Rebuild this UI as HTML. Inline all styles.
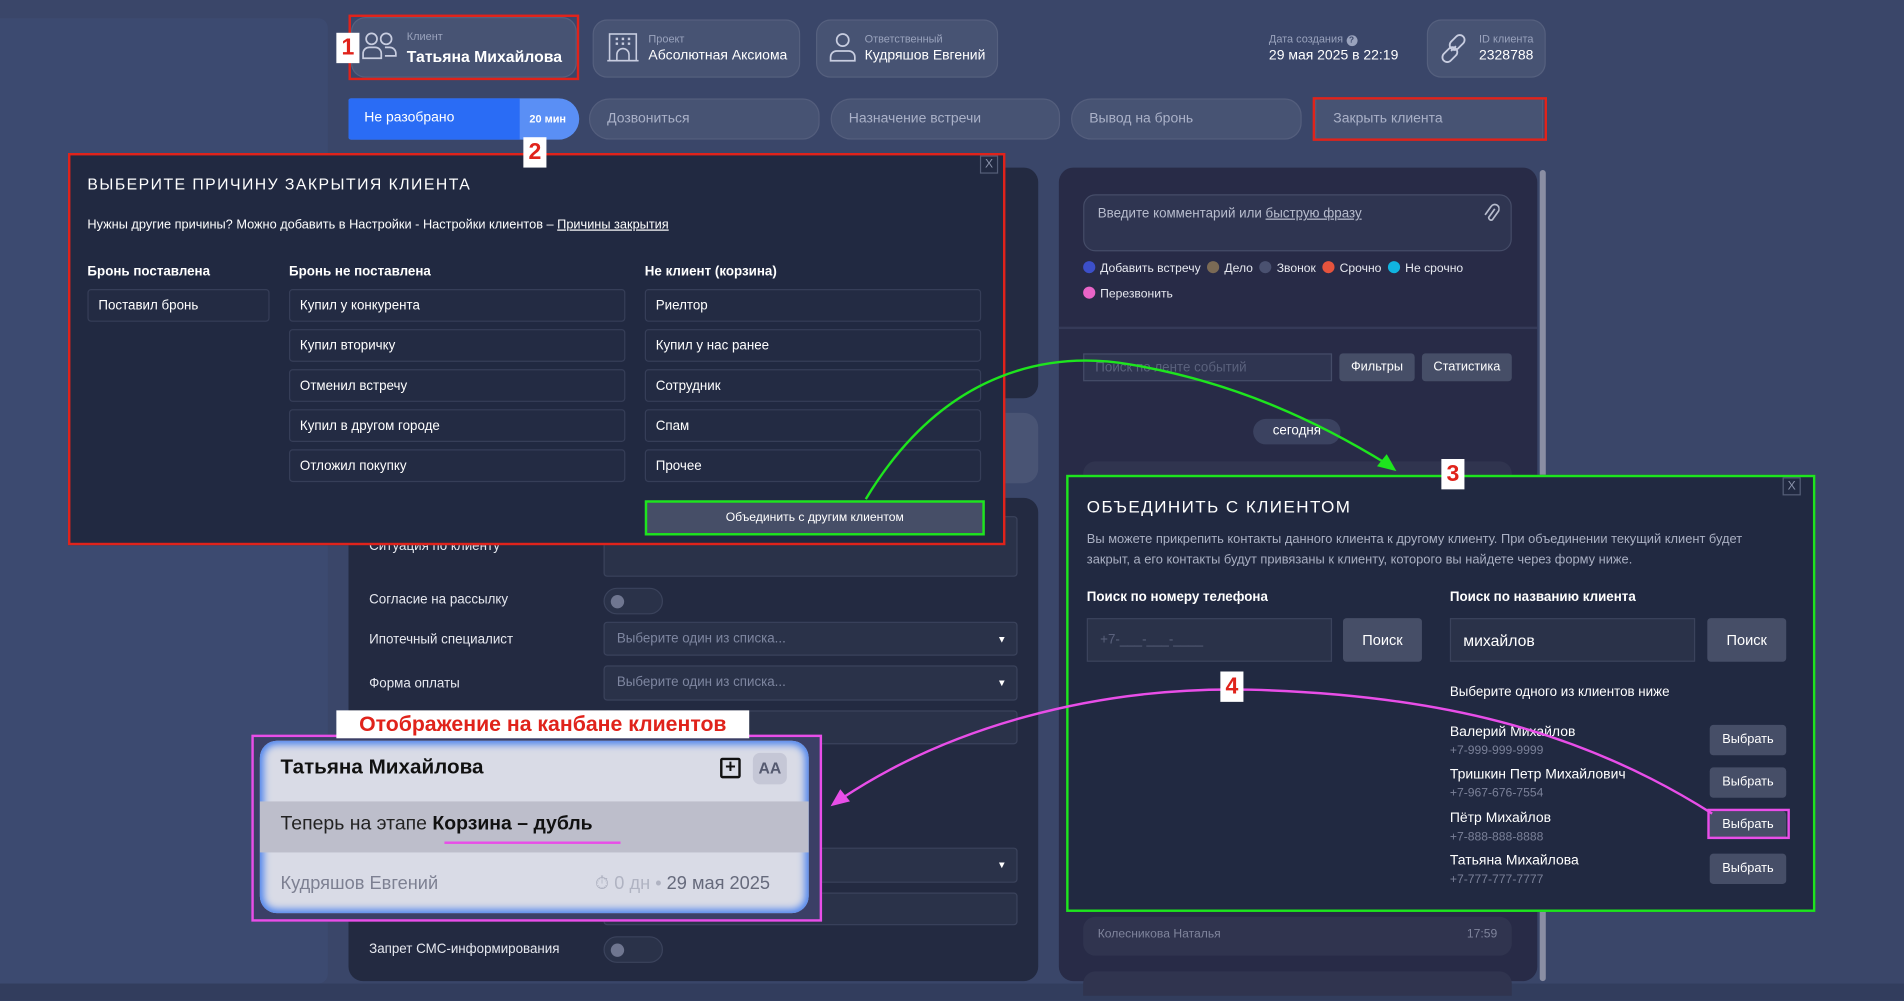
<!DOCTYPE html>
<html><head><meta charset="utf-8"><style>
*{box-sizing:border-box;margin:0;padding:0}
body{width:1904px;height:1000px;overflow:hidden;background:#38446a;font-family:"Liberation Sans","Noto Sans CJK SC",sans-serif;color:#fff}
#w{position:absolute;left:0;top:0;width:1568px;height:824px;transform:scale(1.21429);transform-origin:0 0;background:#3a4669}
.a{position:absolute}
.card{position:absolute;background:rgba(255,255,255,0.07);border:1px solid rgba(255,255,255,0.08);border-radius:12px}
.lbl{font-size:9px;color:#9aa3bd}
.val{font-size:11.5px;color:#fff}
.tab{position:absolute;top:81px;height:34px;border-radius:17px 14px 14px 17px;background:rgba(255,255,255,0.07);border:1px solid rgba(255,255,255,0.07);font-size:11.5px;color:#aab1c8;padding:10px 0 0 14px}
.btn{position:absolute;height:27px;background:#232b43;border:1px solid #363e58;border-radius:3px;font-size:11px;color:#fff;padding:7px 0 0 8px}
.h{position:absolute;font-size:11px;font-weight:bold;color:#fff}
.lab{position:absolute;left:304px;font-size:11px;color:#e6e8ef}
.inp{position:absolute;left:497px;width:341px;background:#2a3249;border:1px solid #3b435c;border-radius:3px;font-size:11px;color:#7e86a0;padding:7px 10px}
.tog{position:absolute;left:497px;width:49px;height:22px;border-radius:11px;background:#2a3249;border:1px solid #3b435c}
.tog:after{content:"";position:absolute;left:5px;top:5px;width:11px;height:11px;border-radius:50%;background:#6f7690}
.dot{display:inline-block;width:10px;height:10px;border-radius:50%;margin-right:4px;vertical-align:-1px}
.sb{position:absolute;background:#464e67;border-radius:3px;font-size:11px;color:#fff;text-align:center}
.badge{position:absolute;background:#fff;color:#e0231b;font-weight:bold;font-size:19px;text-align:center;line-height:25px;width:19px;height:25px}
.x{position:absolute;width:15px;height:15px;border:1px solid #555e78;color:#8a92aa;font-size:10px;text-align:center;line-height:13px}
</style></head><body><div id="w">
<div class="a" style="left:0;top:15px;width:270px;height:795px;background:#3c4a70;border-radius:0 8px 8px 0"></div>
<div class="a" style="left:0;top:810px;width:1568px;height:14px;background:#323d5d"></div>

<div class="card" style="left:289px;top:14px;width:186px;height:50px"></div>
<svg class="a" style="left:298px;top:26px" width="30" height="24" viewBox="0 0 30 24" fill="none" stroke="#c8cde0" stroke-width="1.4"><circle cx="8" cy="6" r="4.5"/><circle cx="20" cy="6" r="4.5"/><path d="M1 22v-4a5 5 0 0 1 5-5h5a5 5 0 0 1 5 5v4z"/><path d="M19 13h4a5 5 0 0 1 5 5v2h-9"/></svg>
<div class="a lbl" style="left:335px;top:25px">Клиент</div>
<div class="a" style="left:335px;top:39px;font-size:13px;font-weight:bold">Татьяна Михайлова</div>
<div class="a" style="left:287px;top:12px;width:190px;height:54px;border:2px solid #e0231b"></div>

<div class="card" style="left:488px;top:16px;width:171px;height:48px"></div>
<svg class="a" style="left:500px;top:27px" width="26" height="24" viewBox="0 0 26 24" fill="none" stroke="#c8cde0" stroke-width="1.3"><rect x="2" y="1" width="22" height="22"/><path d="M7 5h2M12 5h2M17 5h2M7 9h2M12 9h2M17 9h2" stroke-width="2"/><path d="M8 23v-5a5 5 0 0 1 10 0v5"/><path d="M0 23h26"/></svg>
<div class="a lbl" style="left:534px;top:27px">Проект</div>
<div class="a val" style="left:534px;top:40px">Абсолютная Аксиома</div>

<div class="card" style="left:672px;top:16px;width:150px;height:48px"></div>
<svg class="a" style="left:682px;top:26px" width="24" height="26" viewBox="0 0 24 26" fill="none" stroke="#c8cde0" stroke-width="1.4"><circle cx="12" cy="7" r="5"/><path d="M2 24v-3a5 5 0 0 1 5-5h10a5 5 0 0 1 5 5v3z"/></svg>
<div class="a lbl" style="left:712px;top:27px">Ответственный</div>
<div class="a val" style="left:712px;top:40px">Кудряшов Евгений</div>

<div class="a lbl" style="left:1045px;top:27px">Дата создания <span style="display:inline-block;width:9px;height:9px;border-radius:50%;background:#9aa3bd;color:#3a4669;font-size:7px;text-align:center;line-height:9px;font-weight:bold">?</span></div>
<div class="a val" style="left:1045px;top:40px">29 мая 2025 в 22:19</div>

<div class="card" style="left:1175px;top:16px;width:98px;height:48px"></div>
<svg class="a" style="left:1184px;top:27px" width="26" height="26" viewBox="0 0 26 26" fill="none" stroke="#c8cde0" stroke-width="1.5"><path d="M11 15l4-4"/><rect x="12" y="1" width="8" height="14" rx="4" transform="rotate(45 16 8)"/><rect x="6" y="11" width="8" height="14" rx="4" transform="rotate(45 10 18)"/></svg>
<div class="a lbl" style="left:1218px;top:27px">ID клиента</div>
<div class="a val" style="left:1218px;top:40px">2328788</div>

<div class="a" style="left:287px;top:81px;width:190px;height:34px;border-radius:2px 17px 17px 2px;background:#5a8ff5"></div>
<div class="a" style="left:287px;top:81px;width:141px;height:34px;border-radius:2px 0 0 2px;background:#2a6cf5"></div>
<div class="a" style="left:300px;top:91px;font-size:11.5px">Не разобрано</div>
<div class="a" style="left:436px;top:93px;font-size:9px;font-weight:bold">20 мин</div>
<div class="tab" style="left:485px;width:190px">Дозвониться</div>
<div class="tab" style="left:684px;width:189px">Назначение встречи</div>
<div class="tab" style="left:882px;width:190px">Вывод на бронь</div>
<div class="tab" style="left:1083px;width:188px;border-radius:0">Закрыть клиента</div>
<div class="a" style="left:1081px;top:80px;width:193px;height:36px;border:2px solid #e0231b"></div>

<div class="a" style="left:287px;top:138px;width:568px;height:190px;background:#232a41;border-radius:12px"></div>
<div class="a" style="left:810px;top:340px;width:45px;height:58px;background:rgba(255,255,255,0.08);border-radius:12px"></div>
<div class="a" style="left:287px;top:410px;width:568px;height:398px;background:#232a41;border-radius:12px"></div>
<div class="lab" style="top:444px">Ситуация по клиенту</div>
<div class="inp" style="top:425px;height:50px"></div>
<div class="lab" style="top:488px">Согласие на рассылку</div>
<div class="tog" style="top:484px"></div>
<div class="lab" style="top:521px">Ипотечный специалист</div>
<div class="inp" style="top:512px;height:28px">Выберите один из списка...<span style="position:absolute;right:8px;color:#fff;font-size:8px;top:9px">▼</span></div>
<div class="lab" style="top:557px">Форма оплаты</div>
<div class="inp" style="top:548px;height:29px">Выберите один из списка...<span style="position:absolute;right:8px;color:#fff;font-size:8px;top:9px">▼</span></div>
<div class="inp" style="top:585px;height:28px"></div>
<div class="inp" style="top:698px;height:29px"><span style="position:absolute;right:8px;color:#fff;font-size:8px;top:9px">▼</span></div>
<div class="inp" style="top:735px;height:27px"></div>
<div class="lab" style="top:776px">Запрет СМС-информирования</div>
<div class="tog" style="top:771px"></div>

<div class="a" style="left:872px;top:138px;width:394px;height:670px;background:#282b47;border-radius:12px"></div>
<div class="a" style="left:1268px;top:140px;width:5px;height:668px;background:#8a8ea3;border-radius:3px"></div>
<div class="a" style="left:892px;top:160px;width:353px;height:47px;background:#2f3551;border:1px solid #454c68;border-radius:10px;font-size:11px;color:#b7bccd;padding:9px 11px">Введите комментарий или <u>быструю фразу</u></div>
<svg class="a" style="left:1221px;top:167px" width="14" height="17" viewBox="0 0 14 17" fill="none" stroke="#b7bccd" stroke-width="1.4"><path d="M10 5l-5 7a2 2 0 0 0 3 2l5-7a3.5 3.5 0 0 0-6-4l-5 7"/></svg>
<div class="a" style="left:892px;top:215px;font-size:10px;color:#e6e8ef;white-space:nowrap"><span class="dot" style="background:#3c4fc9"></span>Добавить встречу &nbsp;<span class="dot" style="background:#7b6a55"></span>Дело &nbsp;<span class="dot" style="background:#4a5170"></span>Звонок &nbsp;<span class="dot" style="background:#e5533d"></span>Срочно &nbsp;<span class="dot" style="background:#10b4e0"></span>Не срочно</div>
<div class="a" style="left:892px;top:236px;font-size:10px;color:#e6e8ef"><span class="dot" style="background:#e964c8"></span>Перезвонить</div>
<div class="a" style="left:872px;top:269px;width:394px;height:2px;background:#353a58"></div>
<div class="a" style="left:892px;top:291px;width:205px;height:23px;background:#2f3551;border:1px solid #454c68;font-size:11px;color:#5a617c;padding:5px 9px">Поиск по ленте событий</div>
<div class="sb" style="left:1103px;top:291px;width:62px;height:23px;line-height:23px;font-size:10.5px">Фильтры</div>
<div class="sb" style="left:1171px;top:291px;width:74px;height:23px;line-height:23px;font-size:10.5px">Статистика</div>
<div class="a" style="left:1032px;top:345px;width:72px;height:21px;border-radius:11px;background:#3b4260;font-size:11px;text-align:center;line-height:21px">сегодня</div>
<div class="a" style="left:892px;top:380px;width:353px;height:30px;border-radius:10px;background:#30344f"></div>
<div class="a" style="left:892px;top:755px;width:353px;height:32px;border-radius:10px;background:#30344f;font-size:10px;color:#7f849c;padding:9px 12px">Колесникова Наталья<span style="float:right">17:59</span></div>
<div class="a" style="left:892px;top:800px;width:353px;height:20px;border-radius:10px 10px 0 0;background:#30344f"></div>

<div class="a" style="left:56px;top:126px;width:772px;height:323px;background:#212941;border:2px solid #e0231b"></div>
<div class="x" style="left:807px;top:128px">X</div>
<div class="a" style="left:72px;top:144px;font-size:13px;letter-spacing:1.2px">ВЫБЕРИТЕ ПРИЧИНУ ЗАКРЫТИЯ КЛИЕНТА</div>
<div class="a" style="left:72px;top:179px;font-size:10.5px">Нужны другие причины? Можно добавить в Настройки - Настройки клиентов – <u>Причины закрытия</u></div>
<div class="h" style="left:72px;top:218px">Бронь поставлена</div>
<div class="h" style="left:238px;top:218px">Бронь не поставлена</div>
<div class="h" style="left:531px;top:218px">Не клиент (корзина)</div>
<div class="btn" style="left:72px;top:238px;width:150px">Поставил бронь</div>
<div class="btn" style="left:238px;top:238px;width:277px">Купил у конкурента</div>
<div class="btn" style="left:238px;top:271px;width:277px">Купил вторичку</div>
<div class="btn" style="left:238px;top:304px;width:277px">Отменил встречу</div>
<div class="btn" style="left:238px;top:337px;width:277px">Купил в другом городе</div>
<div class="btn" style="left:238px;top:370px;width:277px">Отложил покупку</div>
<div class="btn" style="left:531px;top:238px;width:277px">Риелтор</div>
<div class="btn" style="left:531px;top:271px;width:277px">Купил у нас ранее</div>
<div class="btn" style="left:531px;top:304px;width:277px">Сотрудник</div>
<div class="btn" style="left:531px;top:337px;width:277px">Спам</div>
<div class="btn" style="left:531px;top:370px;width:277px">Прочее</div>
<div class="a" style="left:531px;top:412px;width:280px;height:29px;background:#464e67;border:2px solid #1ee51e;font-size:10px;text-align:center;line-height:25px">Объединить с другим клиентом</div>

<div class="a" style="left:878px;top:391px;width:617px;height:360px;background:#212941;border:2px solid #1ee51e"></div>
<div class="x" style="left:1468px;top:393px">X</div>
<div class="a" style="left:895px;top:409px;font-size:14px;letter-spacing:1.2px">ОБЪЕДИНИТЬ С КЛИЕНТОМ</div>
<div class="a" style="left:895px;top:436px;width:560px;font-size:10.6px;line-height:17px;color:#aab0c3">Вы можете прикрепить контакты данного клиента к другому клиенту. При объединении текущий клиент будет закрыт, а его контакты будут привязаны к клиенту, которого вы найдете через форму ниже.</div>
<div class="h" style="left:895px;top:486px">Поиск по номеру телефона</div>
<div class="h" style="left:1194px;top:486px">Поиск по названию клиента</div>
<div class="a" style="left:895px;top:509px;width:202px;height:36px;background:#2a3249;border:1px solid #3b435c;font-size:11px;color:#5a617c;padding:11px 10px">+7-___-___-____</div>
<div class="sb" style="left:1106px;top:509px;width:65px;height:36px;line-height:36px;font-size:12px">Поиск</div>
<div class="a" style="left:1194px;top:509px;width:202px;height:36px;background:#2a3249;border:1px solid #3b435c;font-size:13px;color:#fff;padding:10px 10px">михайлов</div>
<div class="sb" style="left:1406px;top:509px;width:65px;height:36px;line-height:36px;font-size:12px">Поиск</div>
<div class="a" style="left:1194px;top:564px;font-size:11px">Выберите одного из клиентов ниже</div>
<div class="a" style="left:1194px;top:596px;font-size:11.5px;line-height:15px">Валерий Михайлов<br><span style="font-size:10px;color:#7a8098">+7-999-999-9999</span></div>
<div class="a" style="left:1194px;top:631px;font-size:11.5px;line-height:15px">Тришкин Петр Михайлович<br><span style="font-size:10px;color:#7a8098">+7-967-676-7554</span></div>
<div class="a" style="left:1194px;top:667px;font-size:11.5px;line-height:15px">Пётр Михайлов<br><span style="font-size:10px;color:#7a8098">+7-888-888-8888</span></div>
<div class="a" style="left:1194px;top:702px;font-size:11.5px;line-height:15px">Татьяна Михайлова<br><span style="font-size:10px;color:#7a8098">+7-777-777-7777</span></div>
<div class="sb" style="left:1408px;top:597px;width:63px;height:25px;line-height:25px;font-size:10.5px">Выбрать</div>
<div class="sb" style="left:1408px;top:632px;width:63px;height:25px;line-height:25px;font-size:10.5px">Выбрать</div>
<div class="sb" style="left:1408px;top:668px;width:63px;height:23px;line-height:23px;font-size:10.5px">Выбрать</div>
<div class="a" style="left:1406px;top:666px;width:68px;height:25px;border:2px solid #e84ee8"></div>
<div class="sb" style="left:1408px;top:703px;width:63px;height:25px;line-height:25px;font-size:10.5px">Выбрать</div>

<div class="a" style="left:207px;top:605px;width:470px;height:154px;border:2px solid #e84ee8;background:#3b3f66"></div>
<div class="a" style="left:214px;top:610px;width:452px;height:142px;border-radius:14px;background:#d9dbe6;box-shadow:0 0 6px 3px #4b82ee inset;overflow:hidden">
 <div class="a" style="left:0;top:50px;width:452px;height:42px;background:#bdbecb"></div>
</div>
<div class="a" style="left:231px;top:622px;font-size:17px;font-weight:bold;color:#111">Татьяна Михайлова</div>
<div class="a" style="left:593px;top:624px;width:17px;height:17px;border:2px solid #111;border-radius:2px;font-size:15px;line-height:12px;text-align:center;color:#111;font-weight:bold">+</div>
<div class="a" style="left:620px;top:620px;width:28px;height:26px;border-radius:6px;background:#c5c7d6;font-size:13px;font-weight:bold;color:#555a70;text-align:center;line-height:26px">АА</div>
<div class="a" style="left:231px;top:670px;font-size:16px;color:#222">Теперь на этапе <b style="color:#111">Корзина – дубль</b></div>
<div class="a" style="left:366px;top:693px;width:145px;height:2px;background:#e84ee8"></div>
<div class="a" style="left:231px;top:719px;font-size:15px;color:#7d8092">Кудряшов Евгений</div>
<div class="a" style="left:490px;top:719px;font-size:15px;color:#b0b3c2">⏱ 0 дн • <span style="color:#666a7c">29 мая 2025</span></div>
<div class="a" style="left:277px;top:585px;width:340px;height:23px;background:#fff;color:#e0231b;font-weight:bold;font-size:17.5px;text-align:center;line-height:23px">Отображение на канбане клиентов</div>

<svg class="a" style="left:0;top:0" width="1568" height="824">
 <path d="M713 411 C780 300 870 290 930 300 C1020 315 1090 350 1142 382" fill="none" stroke="#1ee51e" stroke-width="2"/>
 <polygon points="1150,388 1134,384 1142,374" fill="#1ee51e"/>
 <path d="M1410 670 C1300 600 1180 572 1030 568 C900 565 780 600 694 657" fill="none" stroke="#e84ee8" stroke-width="2"/>
 <polygon points="684,664 692,650 700,660" fill="#e84ee8"/>
</svg>

<div class="badge" style="left:277px;top:27px">1</div>
<div class="badge" style="left:431px;top:113px">2</div>
<div class="badge" style="left:1187px;top:378px">3</div>
<div class="badge" style="left:1005px;top:553px">4</div>
</div></body></html>
